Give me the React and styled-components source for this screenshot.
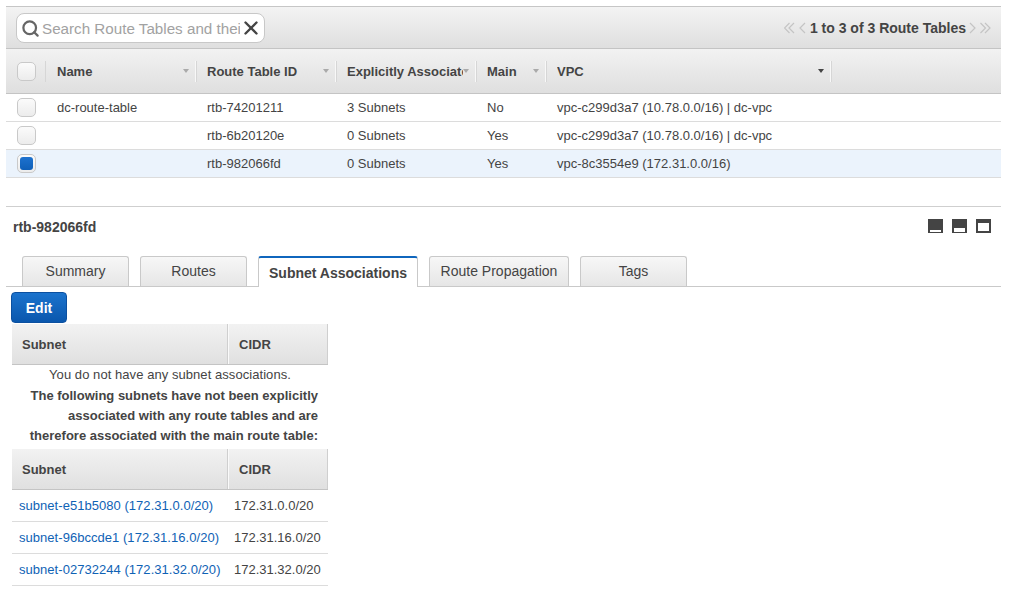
import React from "react";
import styled, { createGlobalStyle } from "styled-components";
import { Search, X } from "lucide-react";

const Global = createGlobalStyle`
  html, body { margin: 0; padding: 0; background: #fff; }
  body { font-family: "Liberation Sans", Arial, sans-serif; font-size: 13px; color: #444; }
`;
const Page = styled.div`
  width: 1016px; height: 605px; overflow: hidden; box-sizing: border-box; padding: 6px 15px 0 6px;
`;
const TopBar = styled.div`
  height: 41px; border-top: 1px solid #c6c6c6; border-bottom: 1px solid #c4c4c4;
  background: linear-gradient(#f3f3f3, #dfdfdf);
  display: flex; align-items: center; justify-content: space-between; padding: 0 10px 0 10px;
`;
const SearchBox = styled.div`
  width: 249px; height: 30px; box-sizing: border-box; border: 1px solid #c8c8c8; border-radius: 8px; background: #fff;
  display: flex; align-items: center; padding: 0 0 0 4px; color: #666; margin-top: 1px;
`;
const SearchText = styled.div`
  width: 198px; margin-left: 2px; overflow: hidden; white-space: nowrap; font-size: 15.2px; color: #a2a2a2; flex: none;
`;
const Pager = styled.div`
  display: flex; align-items: center; font-size: 14px; font-weight: 700; color: #444; margin-top: 1px;
`;
const PagerIcon = styled.svg`
  width: ${p => p.$w}px; height: 12px; fill: none; stroke: #c4c4c4; stroke-width: 1.2;
  margin: ${p => p.$m};
`;
const Row = styled.div`
  display: grid; grid-template-columns: 41px 150px 140px 140px 70px 285px 1fr; height: ${p => p.$h || 28}px; box-sizing: border-box;
  align-items: center; border-bottom: 1px solid #dcdcdc; background: ${p => p.$selected ? "#ebf3fc" : "#fff"};
`;
const HeaderRow = styled(Row)`
  height: 45px; background: linear-gradient(#f2f2f2, #dfdfdf); border-bottom: 1px solid #c4c4c4;
`;
const HCell = styled.div`
  position: relative; height: 21px; display: flex; align-items: center; justify-content: space-between; padding: 0 8px 0 10px;
  font-weight: 700; color: #444; white-space: nowrap; overflow: hidden; box-sizing: border-box;
  &::after { content: ""; position: absolute; right: 0; top: 0; bottom: 0; width: 1px; background: #d6d6d6; box-shadow: -1px 0 0 #f8f8f8; }
`;
const HLabel = styled.span`
  overflow: hidden; flex: 1; min-width: 0;
`;
const Caret = styled.span`
  flex: none; width: 0; height: 0; border-left: 3.5px solid transparent; border-right: 3.5px solid transparent;
  border-top: 4px solid ${p => p.$dark ? "#444" : "#aaa"};
`;
const BoxCell = styled.div`
  position: relative; height: 21px; display: flex; align-items: center; padding-left: 11px;
  &::after { content: ""; position: absolute; right: 1px; top: 0; bottom: 0; width: 1px; background: #d6d6d6; display: ${p => p.$sep ? "block" : "none"}; }
`;
const Check = styled.div`
  width: 19px; height: 19px; box-sizing: border-box; border: 1px solid #c9c9c9; border-radius: 5px; background: linear-gradient(#fbfbfb, #ececec);
  display: flex; align-items: center; justify-content: center;
`;
const CheckFill = styled.div`
  width: 13px; height: 13px; border-radius: 3px; background: linear-gradient(#1d72cf, #0f5fb8);
`;
const Cell = styled.div`
  padding-left: 10px; white-space: nowrap; color: #444;
`;
const DetailHead = styled.div`
  margin-top: 28px; border-top: 1px solid #cfcfcf; height: 50px; display: flex; justify-content: space-between; padding: 12px 10px 0 7px; align-items: flex-start; box-sizing: border-box;
`;
const Title = styled.div`
  font-weight: 700; color: #444; font-size: 14px;
`;
const PaneIcons = styled.div`
  display: flex; gap: 9px;
`;
const Tabs = styled.div`
  height: 31px; box-sizing: border-box; border-bottom: 1px solid #c9c9c9; display: flex; padding-left: 16px;
`;
const Tab = styled.div`
  width: ${p => p.$w}px; margin-right: ${p => p.$mr}px; height: 30px; box-sizing: border-box; text-align: center; font-size: 14px;
  padding-top: 6px; color: #444; border: 1px solid #c9c9c9; border-bottom: none; border-radius: 3px 3px 0 0;
  background: linear-gradient(#f7f7f7, #e6e6e6);
`;
const ActiveTab = styled.div`
  width: ${p => p.$w}px; margin-right: ${p => p.$mr}px; height: 31px; box-sizing: border-box; text-align: center; font-size: 14px; font-weight: 700;
  padding-top: 7px; color: #444; border-top: 2px solid #0f66bd; border-left: 1px solid #c9c9c9; border-right: 1px solid #c9c9c9;
  border-radius: 3px 3px 0 0; background: #fff;
`;
const Edit = styled.button`
  display: block; width: 56px; height: 31px; margin: 5px 0 1px 5px; border: 1px solid #0b50a0; border-radius: 4px; padding: 0;
  background: linear-gradient(#1b73cd, #0a57ad); color: #fff; font: 700 14px "Liberation Sans", Arial, sans-serif;
`;
const Assoc = styled.div`
  width: 316px; margin-left: 6px;
`;
const SubHeader = styled.div`
  display: grid; grid-template-columns: 217px 99px; height: ${p => p.$h}px; box-sizing: border-box; align-items: center;
  background: linear-gradient(#f2f2f2, #e0e0e0); border-bottom: 1px solid #c4c4c4; font-weight: 700; color: #444;
`;
const SubHead = styled.div`
  height: 100%; display: flex; align-items: center; padding-left: 10px; box-sizing: border-box;
  border-right: 1px solid ${p => p.$last ? "#cfcfcf" : "#fafafa"}; box-shadow: ${p => p.$last ? "none" : "inset -1px 0 0 #cfcfcf"};
`;
const Note = styled.div`
  text-align: center; height: 21px; line-height: 20px; letter-spacing: 0.06px;
`;
const StrongBlock = styled.div`
  padding-bottom: 3px;
`;
const Strong = styled.div`
  text-align: right; font-weight: 700; padding-right: 10px; line-height: 20px; height: 20px; white-space: nowrap;
`;
const SubRow = styled.div`
  display: grid; grid-template-columns: 222px 94px; height: 32px; box-sizing: border-box; align-items: center; border-bottom: 1px solid #dcdcdc; white-space: nowrap;
`;
const SubLink = styled.a`
  color: #0f62b5; padding-left: 7px; text-decoration: none; letter-spacing: 0.04px;
`;
const columns = ["Name", "Route Table ID", "Explicitly Associated With", "Main"];
const rows = [
  ["dc-route-table", "rtb-74201211", "3 Subnets", "No", "vpc-c299d3a7 (10.78.0.0/16) | dc-vpc"],
  ["", "rtb-6b20120e", "0 Subnets", "Yes", "vpc-c299d3a7 (10.78.0.0/16) | dc-vpc"],
  ["", "rtb-982066fd", "0 Subnets", "Yes", "vpc-8c3554e9 (172.31.0.0/16)"],
];
const subnets = [
  ["subnet-e51b5080 (172.31.0.0/20)", "172.31.0.0/20"],
  ["subnet-96bccde1 (172.31.16.0/20)", "172.31.16.0/20"],
  ["subnet-02732244 (172.31.32.0/20)", "172.31.32.0/20"],
];
const Chev = ({ dir, double, m }) => {
  const w = double ? 11 : 7;
  const one = x => dir === "l" ? `M${x + 5} 1 L${x} 6 L${x + 5} 11` : `M${x} 1 L${x + 5} 6 L${x} 11`;
  return (
    <PagerIcon $w={w} $m={m} viewBox={`0 0 ${w} 12`}>
      <path d={one(double ? 0.5 : 1)} />
      {double && <path d={one(5)} />}
    </PagerIcon>
  );
};
const Pane = ({ top, h }) => (
  <svg width="15" height="14" viewBox="0 0 15 14">
    <rect width="15" height="14" fill="#444" />
    <rect x={2} y={top ? 4 : 14 - h - 1} width="11" height={top ? 8 : h} fill="#fff" />
  </svg>
);

export default function App() {
  return (
    <Page>
      <Global />
      <TopBar>
        <SearchBox>
          <Search size={19} strokeWidth={2.8} color="#666" style={{ flex: "none" }} />
          <SearchText>Search Route Tables and their Properties</SearchText>
          <X size={22} strokeWidth={2.6} color="#444" style={{ flex: "none" }} />
        </SearchBox>
        <Pager>
          <Chev dir="l" double m="0 4px 0 0" />
          <Chev dir="l" m="0 4px 0 0" />
          <span>1 to 3 of 3 Route Tables</span>
          <Chev dir="r" m="0 4px 0 3px" />
          <Chev dir="r" double m="0" />
        </Pager>
      </TopBar>
      <HeaderRow>
        <BoxCell $sep><Check /></BoxCell>
        {columns.map(c => (
          <HCell key={c}><HLabel>{c}</HLabel><Caret /></HCell>
        ))}
        <HCell><HLabel>VPC</HLabel><Caret $dark /></HCell>
      </HeaderRow>
      {rows.map((r, i) => (
        <Row key={r[1]} $selected={i === 2}>
          <BoxCell><Check>{i === 2 && <CheckFill />}</Check></BoxCell>
          {r.map((c, j) => <Cell key={j}>{c}</Cell>)}
        </Row>
      ))}
      <DetailHead>
        <Title>rtb-982066fd</Title>
        <PaneIcons>
          <Pane h={2} />
          <Pane h={4} />
          <Pane top />
        </PaneIcons>
      </DetailHead>
      <Tabs>
        <Tab $w={107} $mr={11}>Summary</Tab>
        <Tab $w={107} $mr={11}>Routes</Tab>
        <ActiveTab $w={160} $mr={11}>Subnet Associations</ActiveTab>
        <Tab $w={140} $mr={11}>Route Propagation</Tab>
        <Tab $w={107} $mr={0}>Tags</Tab>
      </Tabs>
      <Edit>Edit</Edit>
      <Assoc>
        <SubHeader $h={41}><SubHead>Subnet</SubHead><SubHead $last>CIDR</SubHead></SubHeader>
        <Note>You do not have any subnet associations.</Note>
        <StrongBlock>
          <Strong>The following subnets have not been explicitly</Strong>
          <Strong>associated with any route tables and are</Strong>
          <Strong>therefore associated with the main route table:</Strong>
        </StrongBlock>
        <SubHeader $h={41}><SubHead>Subnet</SubHead><SubHead $last>CIDR</SubHead></SubHeader>
        {subnets.map(s => (
          <SubRow key={s[1]}><SubLink href="#">{s[0]}</SubLink><span>{s[1]}</span></SubRow>
        ))}
      </Assoc>
    </Page>
  );
}
